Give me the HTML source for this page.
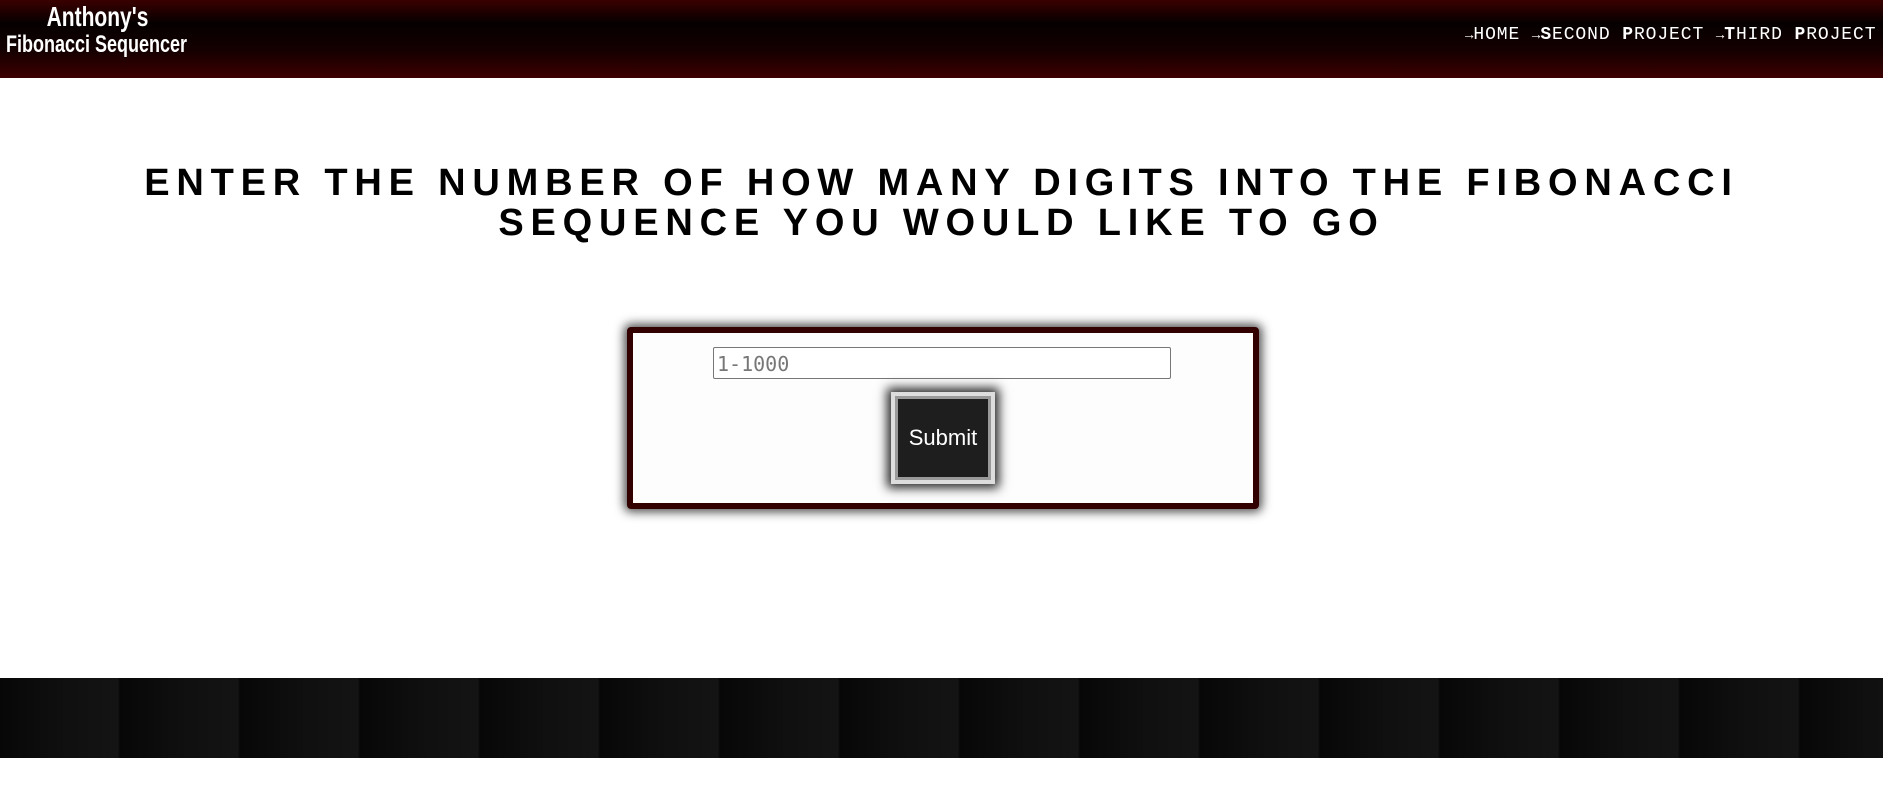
<!DOCTYPE html>
<html><head><meta charset="utf-8"><style>
html,body{margin:0;padding:0;width:1883px;height:792px;background:#fff;overflow:hidden;font-family:"Liberation Sans",sans-serif}
header{position:absolute;left:0;top:0;width:1883px;height:78px;background:linear-gradient(180deg,#3a0000 0%,#050000 30%,#150000 65%,#3d0000 100%)}
.logo{position:absolute;left:6px;top:3px;color:#fff;font-family:"Liberation Sans Narrow","Liberation Sans",sans-serif;font-weight:bold;text-align:center;line-height:28px;font-size:24px;transform:scaleX(.75);transform-origin:left top;width:214px;white-space:nowrap}
.logo .a{font-size:28px;padding-left:30px}
nav{position:absolute;left:1465px;top:25px;color:#fff;font-family:"Liberation Mono",monospace;font-size:18px;letter-spacing:0.9px;white-space:nowrap}
nav b{font-weight:bold}
nav i{font-style:normal;font-size:14px;letter-spacing:0}
h1{position:absolute;left:0;top:163px;width:1883px;margin:0;text-align:center;font-size:38px;line-height:40px;font-weight:900;letter-spacing:6.8px;color:#000;font-family:"Liberation Sans",sans-serif}
.box{position:absolute;left:627px;top:327px;width:620px;height:170px;border:6px solid #300;border-radius:4px;background:#fdfdfd;box-shadow:0 0 10px 3px rgba(0,0,0,.7)}
.inp{position:absolute;left:80px;top:14px;width:458px;height:32px;border:1px solid #777;border-radius:2px;background:#fff;font-family:"DejaVu Sans Mono",monospace;font-size:20px;color:#777;line-height:32px;padding-left:3px;box-sizing:border-box}
.btn{position:absolute;left:258px;top:59px;width:104px;height:92px;box-sizing:border-box;border:4px solid #ddd;outline:3px solid #999;outline-offset:-7px;background:#1e1e1e;color:#fff;text-align:center;line-height:84px;font-size:22px;font-family:"Liberation Sans Narrow",sans-serif;box-shadow:0 0 10px 4px rgba(0,0,0,.85)}
footer{position:absolute;left:0;top:678px;width:1883px;height:80px;background:#0b0b0b;background-image:repeating-linear-gradient(90deg,#070707 0px,#0f0f0f 60px,#141414 118px,#060606 120px)}
</style></head><body>
<header>
<div class="logo"><div class="a">Anthony's</div><div>Fibonacci Sequencer</div></div>
<nav><i>→</i>HOME <i>→</i><b>S</b>ECOND <b>P</b>ROJECT <i>→</i><b>T</b>HIRD <b>P</b>ROJECT</nav>
</header>
<h1>ENTER THE NUMBER OF HOW MANY DIGITS INTO THE FIBONACCI<br>SEQUENCE YOU WOULD LIKE TO GO</h1>
<div class="box">
<div class="inp">1-1000</div>
<div class="btn">Submit</div>
</div>
<footer></footer>
</body></html>
